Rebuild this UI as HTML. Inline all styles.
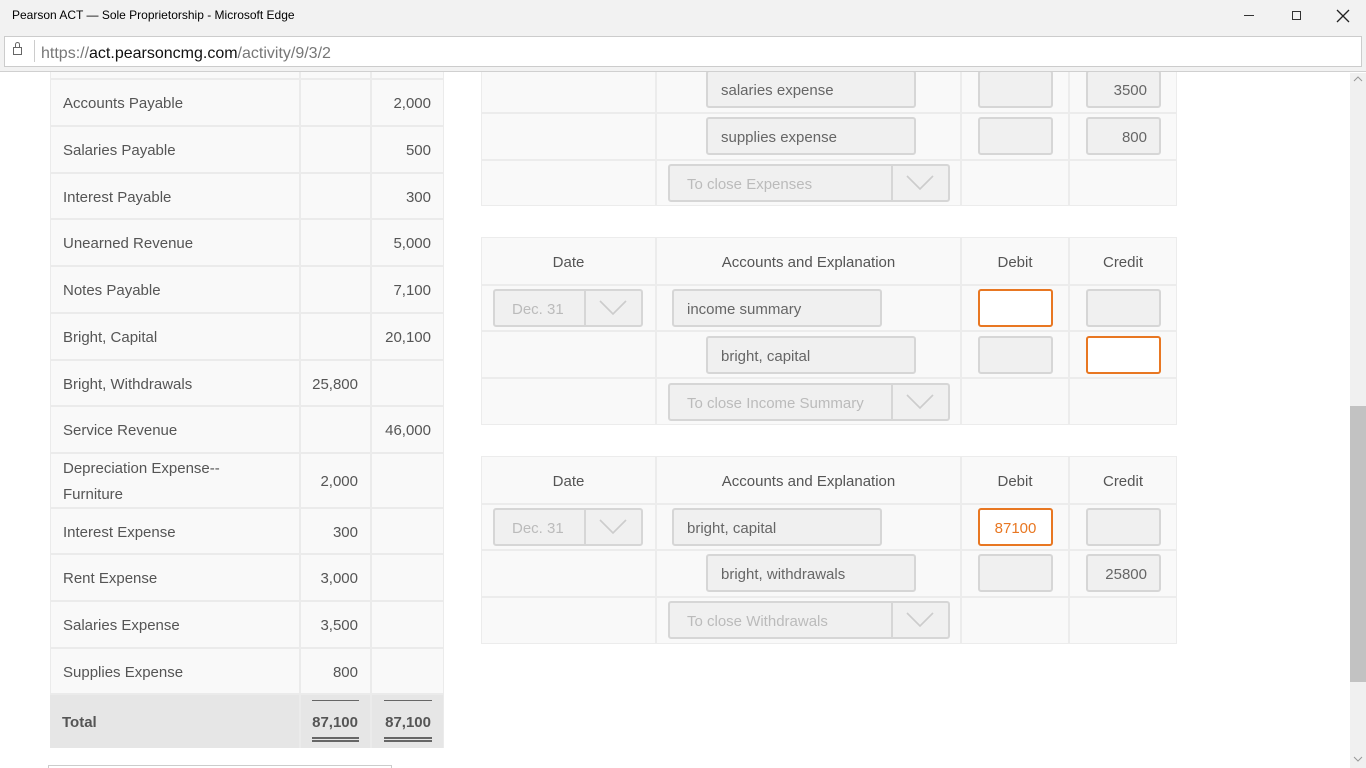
<!DOCTYPE html><html><head><style>
*{margin:0;padding:0;box-sizing:border-box}
body{width:1366px;height:768px;overflow:hidden;background:#fff;font-family:"Liberation Sans",sans-serif;color:#555;position:relative;font-size:15px}
.a{position:absolute}
.c{position:absolute;background:#f9f9f9;display:flex;align-items:center;padding-top:2px}
.n{padding-left:12px}
.r{justify-content:flex-end;padding-right:12px}
.h{justify-content:center}
.inp{position:absolute;background:#f0f0f0;border:2px solid #d6d6d6;border-radius:3px;height:38px;display:flex;align-items:center;padding-left:13px;padding-top:2px;color:#666;font-size:15px}
.num{justify-content:flex-end;padding:2px 12px 0 0}
.or{background:#fff;border-color:#e87722;color:#e87722}
.sel{position:absolute;background:#f0f0f0;border:2px solid #d6d6d6;border-radius:3px;height:38px;display:flex;align-items:center;padding-left:17px;padding-top:2px;color:#bbb}
.sel .ar{position:absolute;right:0;top:0;width:57px;height:34px;border-left:2px solid #d6d6d6}
.sel .ar svg{position:absolute;left:13px;top:9px}
</style></head><body>
<div class="a" style="left:0;top:0;width:1366px;height:33px;background:#f2f2f2"></div>
<div class="a" style="left:12px;top:8px;font-size:12px;color:#000">Pearson ACT — Sole Proprietorship - Microsoft Edge</div>
<div class="a" style="left:1244px;top:15px;width:10px;height:1px;background:#333"></div>
<div class="a" style="left:1292px;top:11px;width:9px;height:9px;border:1px solid #333"></div>
<svg class="a" style="left:1336px;top:9px" width="14" height="14"><path d="M1 1L13 13M13 1L1 13" stroke="#222" stroke-width="1.3"/></svg>
<div class="a" style="left:0;top:33px;width:1366px;height:39px;background:#f2f2f2;border-bottom:1px solid #d0d0d0"></div>
<div class="a" style="left:4px;top:36px;width:1358px;height:31px;background:#fff;border:1px solid #ccc"></div>
<div class="a" style="left:13px;top:47px;width:9px;height:8px;border:1px solid #666"></div>
<div class="a" style="left:15px;top:42px;width:5px;height:6px;border:1px solid #666;border-bottom:0;border-radius:3px 3px 0 0"></div>
<div class="a" style="left:34px;top:40px;width:1px;height:22px;background:#ccc"></div>
<div class="a" style="left:41px;top:45px;font-size:16px;color:#777">https://<span style="color:#111">act.pearsoncmg.com</span>/activity/9/3/2</div>
<div class="a" style="left:1350px;top:73px;width:16px;height:695px;background:#f0f0f0"></div>
<div class="a" style="left:1350px;top:406px;width:16px;height:276px;background:#c2c2c2"></div>
<svg class="a" style="left:1353px;top:76px" width="10" height="6"><path d="M1 5L5 1L9 5" stroke="#999" fill="none"/></svg>
<svg class="a" style="left:1353px;top:756px" width="10" height="6"><path d="M1 1L5 5L9 1" stroke="#999" fill="none"/></svg>

<div class="a" style="left:50px;top:72px;width:394px;height:676px;background:#ebebeb"></div>
<div class="c" style="left:51px;top:72px;width:248px;height:6px"></div><div class="c" style="left:301px;top:72px;width:69px;height:6px"></div><div class="c" style="left:372px;top:72px;width:71px;height:6px"></div>

<div class="c n" style="left:51px;top:80px;width:248px;height:45px">Accounts Payable</div><div class="c" style="left:301px;top:80px;width:69px;height:45px"></div><div class="c r" style="left:372px;top:80px;width:71px;height:45px">2,000</div>
<div class="c n" style="left:51px;top:127px;width:248px;height:45px">Salaries Payable</div><div class="c" style="left:301px;top:127px;width:69px;height:45px"></div><div class="c r" style="left:372px;top:127px;width:71px;height:45px">500</div>
<div class="c n" style="left:51px;top:174px;width:248px;height:44px">Interest Payable</div><div class="c" style="left:301px;top:174px;width:69px;height:44px"></div><div class="c r" style="left:372px;top:174px;width:71px;height:44px">300</div>
<div class="c n" style="left:51px;top:220px;width:248px;height:45px">Unearned Revenue</div><div class="c" style="left:301px;top:220px;width:69px;height:45px"></div><div class="c r" style="left:372px;top:220px;width:71px;height:45px">5,000</div>
<div class="c n" style="left:51px;top:267px;width:248px;height:45px">Notes Payable</div><div class="c" style="left:301px;top:267px;width:69px;height:45px"></div><div class="c r" style="left:372px;top:267px;width:71px;height:45px">7,100</div>
<div class="c n" style="left:51px;top:314px;width:248px;height:45px">Bright, Capital</div><div class="c" style="left:301px;top:314px;width:69px;height:45px"></div><div class="c r" style="left:372px;top:314px;width:71px;height:45px">20,100</div>
<div class="c n" style="left:51px;top:361px;width:248px;height:44px">Bright, Withdrawals</div><div class="c r" style="left:301px;top:361px;width:69px;height:44px">25,800</div><div class="c" style="left:372px;top:361px;width:71px;height:44px"></div>
<div class="c n" style="left:51px;top:407px;width:248px;height:45px">Service Revenue</div><div class="c" style="left:301px;top:407px;width:69px;height:45px"></div><div class="c r" style="left:372px;top:407px;width:71px;height:45px">46,000</div>
<div class="c n" style="left:51px;top:454px;width:248px;height:53px;line-height:26px">Depreciation Expense--<br>Furniture</div><div class="c r" style="left:301px;top:454px;width:69px;height:53px">2,000</div><div class="c" style="left:372px;top:454px;width:71px;height:53px"></div>
<div class="c n" style="left:51px;top:509px;width:248px;height:44px">Interest Expense</div><div class="c r" style="left:301px;top:509px;width:69px;height:44px">300</div><div class="c" style="left:372px;top:509px;width:71px;height:44px"></div>
<div class="c n" style="left:51px;top:555px;width:248px;height:45px">Rent Expense</div><div class="c r" style="left:301px;top:555px;width:69px;height:45px">3,000</div><div class="c" style="left:372px;top:555px;width:71px;height:45px"></div>
<div class="c n" style="left:51px;top:602px;width:248px;height:45px">Salaries Expense</div><div class="c r" style="left:301px;top:602px;width:69px;height:45px">3,500</div><div class="c" style="left:372px;top:602px;width:71px;height:45px"></div>
<div class="c n" style="left:51px;top:649px;width:248px;height:44px">Supplies Expense</div><div class="c r" style="left:301px;top:649px;width:69px;height:44px">800</div><div class="c" style="left:372px;top:649px;width:71px;height:44px"></div>
<div class="c n" style="left:50px;top:695px;width:249px;height:53px;background:#e6e6e6;font-weight:bold">Total</div>
<div class="c r" style="left:301px;top:695px;width:69px;height:53px;background:#e6e6e6;font-weight:bold">87,100</div>
<div class="c r" style="left:372px;top:695px;width:71px;height:53px;background:#e6e6e6;font-weight:bold">87,100</div>
<div class="a" style="left:312px;top:700px;width:47px;height:1px;background:#666"></div>
<div class="a" style="left:384px;top:700px;width:48px;height:1px;background:#666"></div>
<div class="a" style="left:312px;top:737px;width:47px;height:5px;border-top:2px solid #666;border-bottom:2px solid #666"></div>
<div class="a" style="left:384px;top:737px;width:48px;height:5px;border-top:2px solid #666;border-bottom:2px solid #666"></div>
<div class="a" style="left:48px;top:765px;width:344px;height:3px;border:1px solid #ccc;border-bottom:0"></div>

<!-- table 1 -->
<div class="a" style="left:481px;top:72px;width:696px;height:134px;background:#ececec"></div>
<div class="c" style="left:482px;top:72px;width:173px;height:40px"></div><div class="c" style="left:657px;top:72px;width:303px;height:40px"></div><div class="c" style="left:962px;top:72px;width:106px;height:40px"></div><div class="c" style="left:1070px;top:72px;width:106px;height:40px"></div>
<div class="c" style="left:482px;top:114px;width:173px;height:45px"></div><div class="c" style="left:657px;top:114px;width:303px;height:45px"></div><div class="c" style="left:962px;top:114px;width:106px;height:45px"></div><div class="c" style="left:1070px;top:114px;width:106px;height:45px"></div>
<div class="c" style="left:482px;top:161px;width:173px;height:44px"></div><div class="c" style="left:657px;top:161px;width:303px;height:44px"></div><div class="c" style="left:962px;top:161px;width:106px;height:44px"></div><div class="c" style="left:1070px;top:161px;width:106px;height:44px"></div>
<div class="inp" style="left:706px;top:70px;width:210px">salaries expense</div>
<div class="inp" style="left:978px;top:70px;width:75px"></div>
<div class="inp num" style="left:1086px;top:70px;width:75px">3500</div>
<div class="inp" style="left:706px;top:117px;width:210px">supplies expense</div>
<div class="inp" style="left:978px;top:117px;width:75px"></div>
<div class="inp num" style="left:1086px;top:117px;width:75px">800</div>
<div class="sel" style="left:668px;top:164px;width:282px">To close Expenses<div class="ar"><svg width="28" height="16"><path d="M1 1L14 14L27 1" stroke="#ccc" stroke-width="1.6" fill="none"/></svg></div></div>
<div class="a" style="left:0;top:70px;width:1350px;height:2px;background:#f2f2f2;border-bottom:1px solid #d0d0d0"></div>

<!-- table 2 -->
<div class="a" style="left:481px;top:237px;width:696px;height:188px;background:#ececec"></div>
<div class="c h" style="left:482px;top:238px;width:173px;height:46px">Date</div><div class="c h" style="left:657px;top:238px;width:303px;height:46px">Accounts and Explanation</div><div class="c h" style="left:962px;top:238px;width:106px;height:46px">Debit</div><div class="c h" style="left:1070px;top:238px;width:106px;height:46px">Credit</div>
<div class="c" style="left:482px;top:286px;width:173px;height:44px"></div><div class="c" style="left:657px;top:286px;width:303px;height:44px"></div><div class="c" style="left:962px;top:286px;width:106px;height:44px"></div><div class="c" style="left:1070px;top:286px;width:106px;height:44px"></div>
<div class="c" style="left:482px;top:332px;width:173px;height:45px"></div><div class="c" style="left:657px;top:332px;width:303px;height:45px"></div><div class="c" style="left:962px;top:332px;width:106px;height:45px"></div><div class="c" style="left:1070px;top:332px;width:106px;height:45px"></div>
<div class="c" style="left:482px;top:379px;width:173px;height:45px"></div><div class="c" style="left:657px;top:379px;width:303px;height:45px"></div><div class="c" style="left:962px;top:379px;width:106px;height:45px"></div><div class="c" style="left:1070px;top:379px;width:106px;height:45px"></div>
<div class="sel" style="left:493px;top:289px;width:150px">Dec. 31<div class="ar"><svg width="28" height="16"><path d="M1 1L14 14L27 1" stroke="#ccc" stroke-width="1.6" fill="none"/></svg></div></div>
<div class="inp" style="left:672px;top:289px;width:210px">income summary</div>
<div class="inp or" style="left:978px;top:289px;width:75px"></div>
<div class="inp" style="left:1086px;top:289px;width:75px"></div>
<div class="inp" style="left:706px;top:336px;width:210px">bright, capital</div>
<div class="inp" style="left:978px;top:336px;width:75px"></div>
<div class="inp or" style="left:1086px;top:336px;width:75px"></div>
<div class="sel" style="left:668px;top:383px;width:282px">To close Income Summary<div class="ar"><svg width="28" height="16"><path d="M1 1L14 14L27 1" stroke="#ccc" stroke-width="1.6" fill="none"/></svg></div></div>

<!-- table 3 -->
<div class="a" style="left:481px;top:456px;width:696px;height:188px;background:#ececec"></div>
<div class="c h" style="left:482px;top:457px;width:173px;height:46px">Date</div><div class="c h" style="left:657px;top:457px;width:303px;height:46px">Accounts and Explanation</div><div class="c h" style="left:962px;top:457px;width:106px;height:46px">Debit</div><div class="c h" style="left:1070px;top:457px;width:106px;height:46px">Credit</div>
<div class="c" style="left:482px;top:505px;width:173px;height:44px"></div><div class="c" style="left:657px;top:505px;width:303px;height:44px"></div><div class="c" style="left:962px;top:505px;width:106px;height:44px"></div><div class="c" style="left:1070px;top:505px;width:106px;height:44px"></div>
<div class="c" style="left:482px;top:551px;width:173px;height:45px"></div><div class="c" style="left:657px;top:551px;width:303px;height:45px"></div><div class="c" style="left:962px;top:551px;width:106px;height:45px"></div><div class="c" style="left:1070px;top:551px;width:106px;height:45px"></div>
<div class="c" style="left:482px;top:598px;width:173px;height:45px"></div><div class="c" style="left:657px;top:598px;width:303px;height:45px"></div><div class="c" style="left:962px;top:598px;width:106px;height:45px"></div><div class="c" style="left:1070px;top:598px;width:106px;height:45px"></div>
<div class="sel" style="left:493px;top:508px;width:150px">Dec. 31<div class="ar"><svg width="28" height="16"><path d="M1 1L14 14L27 1" stroke="#ccc" stroke-width="1.6" fill="none"/></svg></div></div>
<div class="inp" style="left:672px;top:508px;width:210px">bright, capital</div>
<div class="inp or" style="left:978px;top:508px;width:75px;justify-content:center;padding:2px 0 0 0">87100</div>
<div class="inp" style="left:1086px;top:508px;width:75px"></div>
<div class="inp" style="left:706px;top:554px;width:210px">bright, withdrawals</div>
<div class="inp" style="left:978px;top:554px;width:75px"></div>
<div class="inp num" style="left:1086px;top:554px;width:75px">25800</div>
<div class="sel" style="left:668px;top:601px;width:282px">To close Withdrawals<div class="ar"><svg width="28" height="16"><path d="M1 1L14 14L27 1" stroke="#ccc" stroke-width="1.6" fill="none"/></svg></div></div>
</body></html>
